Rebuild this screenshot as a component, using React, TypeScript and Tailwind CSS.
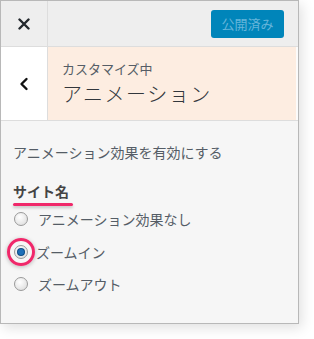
export default function App() {
  const font = { fontFamily: '"Noto Sans CJK JP", "Noto Sans", sans-serif' }
  return (
    <div className="w-[314px] h-[339px] bg-white" style={font}>
      <div className="w-[299px] h-[324px] border border-[#b8b8b8] bg-[#f6f6f6] shadow-[3px_4px_12px_rgba(0,0,0,0.12)] flex flex-col">
        {/* ヘッダー */}
        <div className="h-[46px] shrink-0 flex items-center bg-[#eeeeee] border-b border-[#dddddd]">
          <div className="w-[47px] h-full flex items-center justify-center border-r border-[#dddddd]">
            <svg width="12" height="12" viewBox="0 0 12 12">
              <path d="M1.5 1.5 L10.5 10.5 M10.5 1.5 L1.5 10.5" stroke="#23282d" strokeWidth="2.4" strokeLinecap="round" />
            </svg>
          </div>
          <div className="flex-1" />
          <div className="mr-[14px] w-[73px] h-[28px] rounded-[3px] bg-[#0085ba] flex items-center justify-center text-[13px] text-[#66b5da]">
            公開済み
          </div>
        </div>

        {/* セクションタイトル */}
        <div className="h-[74px] shrink-0 flex bg-[#fbfbfb] border-b border-[#dddddd]">
          <div className="w-[47px] h-full bg-white flex items-center justify-center border-r border-[#dddddd]">
            <svg width="10" height="14" viewBox="0 0 10 14">
              <path d="M7.5 2 L2.5 7 L7.5 12" stroke="#111111" strokeWidth="2.4" fill="none" strokeLinecap="round" strokeLinejoin="round" />
            </svg>
          </div>
          <div className="w-[248px] h-full bg-[#fdede1] pl-[14px] pt-[13px]">
            <div className="text-[13px] leading-[18px] text-[#555d66]">カスタマイズ中</div>
            <div className="text-[20px] leading-[30px] text-[#32373c] mt-[1px] tracking-[1.5px] font-light">アニメーション</div>
          </div>
        </div>

        {/* コンテンツ */}
        <div className="px-[12px] pt-[20px] text-[14px] text-[#555d66]">
          <div className="leading-[22px]">アニメーション効果を有効にする</div>
          <div className="mt-[18px] inline-flex flex-col">
            <span className="font-bold leading-[20px] text-[#444]">サイト名</span>
            <span className="mt-[2px] h-[3px] w-[60px] rounded-full bg-[#f0286a] shadow-[0_2px_3px_rgba(0,0,0,0.2)]" />
          </div>
          <div className="-mt-[3px] flex flex-col">
            <Radio label="アニメーション効果なし" />
            <Radio label="ズームイン" checked />
            <Radio label="ズームアウト" />
          </div>
        </div>
      </div>
    </div>
  )
}

function Radio({ label, checked }: { label: string; checked?: boolean }) {
  return (
    <div className="h-[32.5px] flex items-center">
      <span className="relative w-[14px] h-[14px] ml-[1px] mr-[10px] rounded-full border border-[#9a9a9a] bg-[radial-gradient(circle_at_40%_35%,#ffffff,#d8d8d8)] flex items-center justify-center">
        {checked && <span className="w-[6px] h-[6px] rounded-full bg-[#1e6fb8] shadow-[0_0_0_1px_#0b4c86]" />}
        {checked && (
          <span className="absolute -left-[8px] -top-[8px] w-[28px] h-[28px] rounded-full border-[3px] border-[#f0286a] shadow-[0_1px_4px_rgba(0,0,0,0.25)]" />
        )}
      </span>
      <span className={checked ? '-ml-[2px] leading-[20px]' : 'leading-[20px]'}>{label}</span>
    </div>
  )
}
